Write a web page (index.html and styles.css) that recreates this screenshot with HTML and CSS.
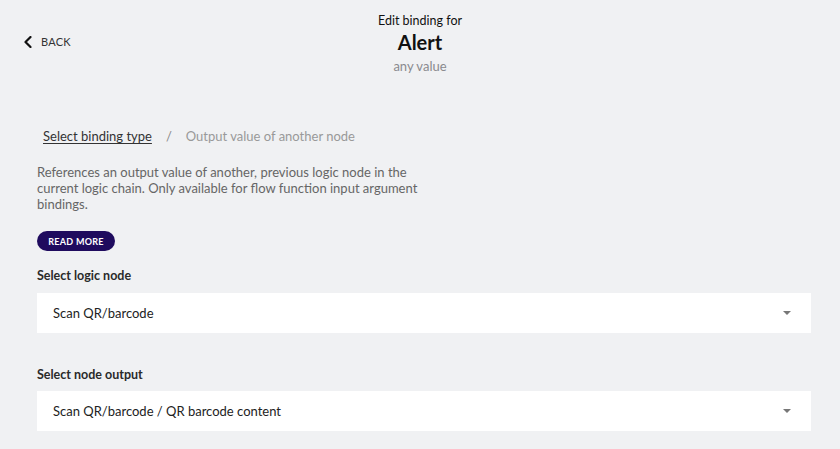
FILE: index.html
```html
<!DOCTYPE html>
<html>
<head>
<meta charset="utf-8">
<link rel="stylesheet" href="styles.css">
</head>
<body>
<header class="top">
  <a class="back" href="#">
    <svg class="back-icon" width="10" height="12" viewBox="0 0 10 12"><path d="M7.5 1 L2.5 6 L7.5 11" fill="none" stroke="#111" stroke-width="2.2" stroke-linecap="round" stroke-linejoin="round"/></svg>
    <span>BACK</span>
  </a>
  <div class="title">
    <div class="title-pre">Edit binding for</div>
    <div class="title-main">Alert</div>
    <div class="title-sub">any value</div>
  </div>
  <div></div>
</header>
<main class="content">
  <nav class="crumbs">
    <a class="crumb-link" href="#">Select binding type</a>
    <span class="crumb-sep">/</span>
    <span class="crumb-current">Output value of another node</span>
  </nav>
  <p class="desc">References an output value of another, previous logic node in the current logic chain. Only available for flow function input argument bindings.</p>
  <button class="read-more">READ MORE</button>
  <div class="field">
    <label class="field-label">Select logic node</label>
    <div class="select"><span>Scan QR/barcode</span><span class="caret"></span></div>
  </div>
  <div class="field field-second">
    <label class="field-label">Select node output</label>
    <div class="select"><span>Scan QR/barcode / QR barcode content</span><span class="caret"></span></div>
  </div>
</main>
</body>
</html>
```
FILE: styles.css
```css
* { box-sizing: border-box; }
html, body { margin: 0; padding: 0; }
body {
  background: #f0f1f3;
  font-family: Lato, "Liberation Sans", sans-serif;
  color: #222;
  width: 840px;
  height: 449px;
  overflow: hidden;
}
.top {
  display: grid;
  grid-template-columns: 1fr auto 1fr;
  align-items: start;
  padding-top: 12px;
  height: 108px;
}
.back {
  display: flex;
  align-items: center;
  gap: 8px;
  height: 12px;
  margin-top: 24px;
  padding-left: 23px;
  color: #333;
  text-decoration: none;
  font-size: 11px;
  line-height: 12px;
  letter-spacing: 0.2px;
}
.title { text-align: center; }
.title-pre { font-size: 12.5px; line-height: 18px; color: #111; }
.title-main { font-size: 20px; font-weight: 700; line-height: 24px; color: #111; }
.title-sub { font-size: 13px; line-height: 24px; color: #8a8a8e; }
.content { padding: 0 29px 0 37px; }
.crumbs {
  display: flex;
  font-size: 13px;
  line-height: 18px;
  padding-left: 6px;
  margin-top: 19px;
}
.crumb-link { color: #333; text-decoration: underline; text-underline-offset: 2px; }
.crumb-sep { color: #888; margin: 0 14px; }
.crumb-current { color: #999; }
.desc {
  margin: 19px 0 0;
  width: 390px;
  font-size: 13px;
  line-height: 16px;
  color: #666;
}
.read-more {
  display: block;
  margin-top: 19px;
  height: 20px;
  width: 78px;
  padding: 0;
  border: none;
  border-radius: 10px;
  background: #1f0b5e;
  color: #fff;
  font-family: inherit;
  font-size: 9px;
  font-weight: 700;
  letter-spacing: 0.3px;
}
.field { margin-top: 17px; }
.field-second { margin-top: 34px; }
.field-label {
  display: block;
  font-size: 12.5px;
  font-weight: 700;
  line-height: 16px;
  color: #2a2a2a;
}
.select {
  margin-top: 8.5px;
  height: 40px;
  background: #fff;
  display: flex;
  align-items: center;
  justify-content: space-between;
  padding: 0 20px 0 16px;
  font-size: 13px;
  color: #222;
}
.caret {
  width: 0;
  height: 0;
  border-left: 4px solid transparent;
  border-right: 4px solid transparent;
  border-top: 4px solid #777;
}
```
